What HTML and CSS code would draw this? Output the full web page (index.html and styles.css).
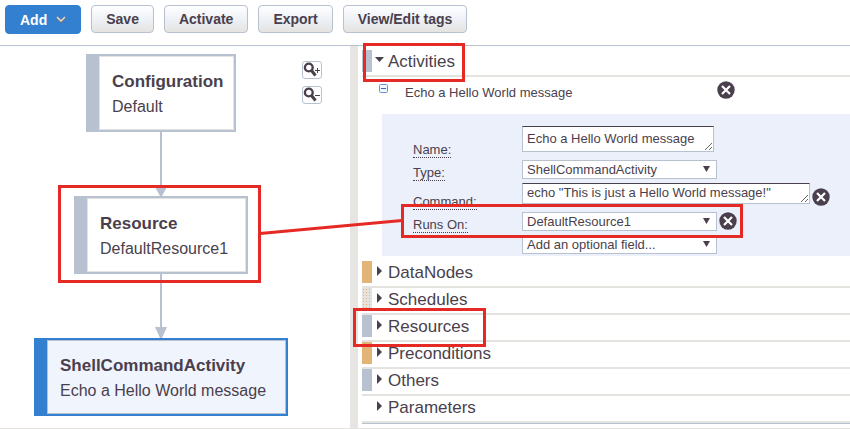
FILE: index.html
```html
<!DOCTYPE html>
<html lang="en">
<head>
<meta charset="utf-8">
<title>Pipeline editor</title>
<link rel="stylesheet" href="styles.css">
</head>
<body>
<div class="app">
  <header class="toolbar">
    <button class="btn btn-primary" type="button">Add
      <svg class="chevron" width="10" height="7" viewBox="0 0 10 7"><path d="M1 1.500 5 5.500 9 1.500" fill="none" stroke="#6e7480" stroke-width="3"/><path d="M1 1 5 5 9 1" fill="none" stroke="#e6dfd4" stroke-width="1.400"/></svg>
    </button>
    <button class="btn" type="button">Save</button>
    <button class="btn" type="button">Activate</button>
    <button class="btn" type="button">Export</button>
    <button class="btn" type="button">View/Edit tags</button>
  </header>

  <main class="workspace">
    <section class="canvas">
      <svg class="links" width="350" height="382" viewBox="0 46 350 382">
        <g fill="#b7c1cf">
          <path d="M160 132h2v56h-2zM155 187h12l-5 9h-2z"/>
          <path d="M160 274h2v54h-2zM155 327h12l-5 11h-2z"/>
        </g>
      </svg>
      <article class="node node-config"><h3>Configuration</h3><p>Default</p></article>
      <article class="node node-resource"><h3>Resource</h3><p>DefaultResource1</p></article>
      <article class="node node-activity"><h3>ShellCommandActivity</h3><p>Echo a Hello World message</p></article>
      <div class="zoom">
        <button type="button" aria-label="Zoom in"><svg width="18" height="16" viewBox="0 0 18 16"><circle cx="5.800" cy="5.500" r="3.900" fill="none" stroke="#4a3f4d" stroke-width="2.400"/><path d="M8.500 8.500 12.500 13.500" stroke="#4a3f4d" stroke-width="3"/><path d="M12 8.500h5M14.500 6v5" stroke="#4a3f4d"/></svg></button>
        <button type="button" aria-label="Zoom out"><svg width="18" height="16" viewBox="0 0 18 16"><circle cx="5.800" cy="5.500" r="3.900" fill="none" stroke="#4a3f4d" stroke-width="2.400"/><path d="M8.500 8.500 12.500 13.500" stroke="#4a3f4d" stroke-width="3"/><path d="M12 8.500h5" stroke="#4a3f4d"/></svg></button>
      </div>
    </section>

    <div class="divider"></div>

    <aside class="panel">
      <button class="section blue open" type="button" aria-expanded="true"><i class="caret"></i><span>Activities</span></button>
      <div class="item">
        <div class="item-head">
          <button class="icon collapse" type="button" aria-label="Collapse"><svg width="9" height="9" viewBox="0 0 9 9"><rect x=".5" y=".5" width="8" height="8" rx="1" fill="#f3f7fd" stroke="#5b9bdc"/><path d="M2 4.500h5" stroke="#2f6fb8"/></svg></button>
          <span class="item-name">Echo a Hello World message</span>
          <button class="icon" type="button" aria-label="Delete activity"><svg width="18" height="18" viewBox="0 0 18 18"><circle cx="9" cy="9" r="8.700" fill="#4a3f4d"/><path d="m5 5 8 8M13 5l-8 8" stroke="#fff" stroke-width="2.200"/></svg></button>
        </div>
        <form class="fields">
          <label for="name">Name:</label>
          <div class="control"><textarea id="name" class="name" rows="1">Echo a Hello World message</textarea></div>
          <label for="type">Type:</label>
          <div class="control"><span class="select"><select id="type"><option>ShellCommandActivity</option></select></span></div>
          <label for="command">Command:</label>
          <div class="control"><textarea id="command" class="command" rows="1">echo "This is just a Hello World message!"</textarea>
            <button class="icon low" type="button" aria-label="Remove command"><svg width="18" height="18" viewBox="0 0 18 18"><circle cx="9" cy="9" r="8.700" fill="#4a3f4d"/><path d="m5 5 8 8M13 5l-8 8" stroke="#fff" stroke-width="2.200"/></svg></button></div>
          <label for="runs">Runs On:</label>
          <div class="control"><span class="select"><select id="runs"><option>DefaultResource1</option></select></span>
            <button class="icon" type="button" aria-label="Remove runs on"><svg width="18" height="18" viewBox="0 0 18 18"><circle cx="9" cy="9" r="8.700" fill="#4a3f4d"/><path d="m5 5 8 8M13 5l-8 8" stroke="#fff" stroke-width="2.200"/></svg></button></div>
          <div class="control last"><span class="select"><select aria-label="Optional field"><option>Add an optional field...</option></select></span></div>
        </form>
      </div>
      <button class="section orange" type="button"><i class="caret"></i><span>DataNodes</span></button>
      <button class="section sand" type="button"><i class="caret"></i><span>Schedules</span></button>
      <button class="section blue" type="button"><i class="caret"></i><span>Resources</span></button>
      <button class="section orange" type="button"><i class="caret"></i><span>Preconditions</span></button>
      <button class="section blue" type="button"><i class="caret"></i><span>Others</span></button>
      <button class="section plain" type="button"><i class="caret"></i><span>Parameters</span></button>
    </aside>
  </main>

  <svg class="marks" width="850" height="429" viewBox="0 0 850 429" aria-hidden="true">
    <g fill="none" stroke="#e52a25" stroke-width="3">
      <rect x="59.500" y="186.500" width="200" height="95"/>
      <rect x="364.500" y="44.500" width="99" height="36"/>
      <rect x="402.500" y="205.500" width="339" height="31"/>
      <rect x="354.500" y="309.500" width="130" height="36"/>
      <path d="M260 233.500 402 220.500"/>
    </g>
  </svg>
</div>
</body>
</html>
```
FILE: styles.css
```css
* { box-sizing: border-box; }

body {
  margin: 0;
  background: #fff;
  color: #4a3f4d;
  font-family: "Liberation Sans", Arial, sans-serif;
  font-size: 13px;
}

button, select, textarea { font: inherit; color: inherit; }
button { cursor: pointer; }

.app {
  position: relative;
  display: flex;
  flex-direction: column;
  min-height: 100vh;
  border-bottom: 1px solid #e4e3e0;
}

.toolbar {
  display: flex;
  align-items: flex-start;
  gap: 10px;
  padding: 5px 5px 11px;
  border-bottom: 1px solid #b7c1cf;
}

.btn {
  height: 28px;
  padding: 0 14px;
  border: 1px solid #b7c1cf;
  border-radius: 4px;
  background: linear-gradient(#fff, #eef1f7 50%, #e4e3e0);
  font-size: 14px;
  font-weight: bold;
}

.btn-primary {
  display: flex;
  align-items: center;
  gap: 9px;
  height: 29px;
  border-color: #3380d0;
  background: #3380d0;
  color: #fff;
}

.workspace { display: flex; flex: 1; }

.canvas { position: relative; flex: 0 0 350px; }

.links { position: absolute; top: 0; left: 0; }

.node {
  position: absolute;
  height: 78px;
  padding: 13px 0 0 13px;
  border: 2px solid #b7c1cf;
  border-left-width: 13px;
  background: #fff;
  box-shadow: inset 0 0 0 1px #e4e3e0;
}

.node h3, .node p { margin: 0; line-height: 25px; white-space: nowrap; }
.node h3 { font-size: 17px; }
.node p { font-size: 16px; }

.node-config { left: 86px; top: 8px; width: 150px; }
.node-resource { left: 74px; top: 150px; width: 174px; }
.node-activity {
  left: 34px;
  top: 292px;
  width: 254px;
  border-color: #3380d0;
  background: #f0f4fc;
  box-shadow: inset 0 0 0 1px #b7c1cf;
}

.zoom {
  position: absolute;
  left: 302px;
  top: 15px;
  display: grid;
  gap: 7px;
}

.zoom button {
  display: block;
  width: 20px;
  height: 18px;
  padding: 0;
  border: 1px solid #b7c1cf;
  border-radius: 3px;
  background: #fff;
}

.zoom svg, .icon svg { display: block; }

.divider { flex: 0 0 8px; background: #e6e5e2; }

.panel {
  flex: 1;
  align-self: flex-start;
  min-width: 0;
  margin: 4px 0 4px 4px;
  border-bottom: 1px solid #b7c1cf;
}

.section {
  display: flex;
  align-items: center;
  width: 100%;
  height: 27px;
  padding: 0 0 3px;
  border: 0;
  border-bottom: 2px solid #e4e3e0;
  background: none;
  font-size: 17px;
  text-align: left;
}

.section::before {
  content: "";
  align-self: stretch;
  width: 10px;
  background: #b7c1cf;
}

.section span { padding-top: 2px; }

.caret {
  width: 5px;
  height: 10px;
  margin: 0 6px 2px 5px;
  background: #4a3f4d;
  clip-path: polygon(0 0, 100% 50%, 0 100%);
}

.open .caret {
  width: 9px;
  height: 5px;
  margin: 0 4px 3px 3px;
  clip-path: polygon(0 0, 100% 0, 50% 100%);
}

.section.orange::before { background: #e2b577; }
.section.sand::before {
  background: radial-gradient(#e2b577 1px, transparent 1px) 0 0 / 3px 3px #e4e3e0;
}
.section.plain::before { background: none; }

.item { padding: 0 0 5px 20px; }

.item-head {
  display: flex;
  align-items: flex-start;
  height: 37px;
  padding-top: 4px;
}

.item-name { width: 312px; padding-top: 4px; }

.icon {
  flex: none;
  padding: 0;
  border: 0;
  background: none;
}

.collapse { width: 26px; padding-top: 3px; margin-left: -3px; }

.fields {
  display: grid;
  grid-template-columns: 109px 1fr;
  grid-template-rows: 34px 23px 29px 23px 21px;
  padding: 12px 0 0 31px;
  background: #ebf0fa;
}

.fields label {
  align-self: end;
  justify-self: start;
  margin-bottom: 2px;
  border-bottom: 1px dotted #4a3f4d;
  line-height: 15px;
}

.control { display: flex; align-items: flex-start; gap: 2px; min-width: 0; }
.control.last { grid-column: 2; }

textarea {
  display: block;
  padding: 4px;
  border: 1px solid #b7c1cf;
  border-top-color: #4a3f4d;
  background: #fff;
  line-height: 15px;
  overflow: hidden;
  resize: both;
}

.name { width: 192px; height: 26px; }
.command { width: 288px; height: 21px; padding-top: 1px; }
.low { padding-top: 5px; }

.select { position: relative; width: 195px; }

.select::after {
  content: "";
  position: absolute;
  right: 7px;
  top: 6px;
  width: 7px;
  height: 6px;
  background: #4a3f4d;
  clip-path: polygon(0 0, 100% 0, 50% 100%);
  pointer-events: none;
}

select {
  display: block;
  width: 100%;
  height: 19px;
  padding: 0 4px;
  border: 1px solid #b7c1cf;
  border-radius: 0;
  background: #fff;
  appearance: none;
}

.marks { position: absolute; top: 0; left: 0; pointer-events: none; }
```
